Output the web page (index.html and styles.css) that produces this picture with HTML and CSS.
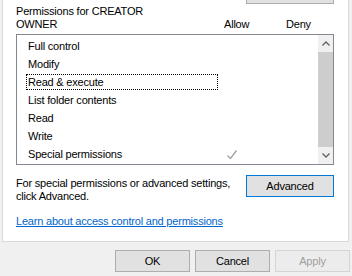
FILE: index.html
```html
<!doctype html>
<html>
<head>
	<title>Permissions</title>
	<link rel="stylesheet" href="styles.css">
</head>
<body>
	<div class="panel">
		<div class="edit-btn"></div>

		<div class="perm-head">
			<div class="perm-title">Permissions for CREATOR<br>OWNER</div>
			<div class="col-allow">Allow</div>
			<div class="col-deny">Deny</div>
		</div>

		<div class="listbox">
			<div class="rows">
				<div class="row"><span class="label">Full control</span><span class="cell"></span><span class="cell deny"></span></div>
				<div class="row"><span class="label">Modify</span><span class="cell"></span><span class="cell deny"></span></div>
				<div class="row"><span class="label focus">Read &amp; execute</span><span class="cell"></span><span class="cell deny"></span></div>
				<div class="row"><span class="label">List folder contents</span><span class="cell"></span><span class="cell deny"></span></div>
				<div class="row"><span class="label">Read</span><span class="cell"></span><span class="cell deny"></span></div>
				<div class="row"><span class="label">Write</span><span class="cell"></span><span class="cell deny"></span></div>
				<div class="row">
					<span class="label">Special permissions</span>
					<span class="cell">
						<svg width="12" height="11" viewBox="0 0 12 11"><polyline points="1.5,6.5 4.5,9.5 10.5,1.5" fill="none" stroke="#a3a3a3" stroke-width="1.4"/></svg>
					</span>
					<span class="cell deny"></span>
				</div>
			</div>
			<div class="scrollbar">
				<div class="arrow">
					<svg width="8" height="5" viewBox="0 0 8 5"><polyline points="0.5,4.5 4,1 7.5,4.5" fill="none" stroke="#606060" stroke-width="1.3"/></svg>
				</div>
				<div class="thumb"></div>
				<div class="arrow">
					<svg width="8" height="5" viewBox="0 0 8 5"><polyline points="0.5,0.5 4,4 7.5,0.5" fill="none" stroke="#606060" stroke-width="1.3"/></svg>
				</div>
			</div>
		</div>

		<div class="advanced-row">
			<div class="advanced-text">For special permissions or advanced settings,<br>click Advanced.</div>
			<button class="btn default">Advanced</button>
		</div>

		<a class="learn" href="#">Learn about access control and permissions</a>
	</div>

	<div class="footer">
		<button class="btn">OK</button>
		<button class="btn">Cancel</button>
		<button class="btn disabled">Apply</button>
	</div>
</body>
</html>
```

FILE: styles.css
```css
body {
	margin: 0;
	width: 352px;
	height: 276px;
	overflow: hidden;
	background: #f0f0f0;
	font-family: "Liberation Sans", Arial, sans-serif;
	font-size: 11px;
	letter-spacing: -0.2px;
	color: #000;
}

.panel {
	margin-left: 2px;
	width: 347px;
	height: 242px;
	box-sizing: border-box;
	padding: 0 14px 0 13px;
	background: #fff;
	border: 1px solid #d9d9d9;
	border-top: none;
	display: flex;
	flex-direction: column;
}

.edit-btn {
	align-self: flex-end;
	width: 86px;
	height: 3px;
	background: #e1e1e1;
	border: 1px solid #adadad;
	border-top: none;
}

.perm-head {
	display: flex;
	align-items: flex-end;
	margin-top: 1px;
	line-height: 13px;
}

.perm-title {
	flex: 1;
}

.col-allow {
	width: 62px;
}

.col-deny {
	width: 48px;
}

.listbox {
	margin-top: 3px;
	height: 131px;
	box-sizing: border-box;
	border: 1px solid #828790;
	display: flex;
}

.rows {
	flex: 1;
	padding-top: 2px;
}

.row {
	display: flex;
	align-items: center;
	height: 18px;
}

.row .label {
	width: 192px;
	height: 16px;
	margin-left: 9px;
	padding-left: 1px;
	box-sizing: border-box;
	border: 1px dotted transparent;
	line-height: 14px;
	white-space: nowrap;
}

.row .label.focus {
	border-color: #000;
}

.cell {
	width: 18px;
	height: 16px;
	margin-left: 5px;
	display: flex;
	align-items: center;
	justify-content: center;
}

.cell.deny {
	margin-left: 49px;
}

.scrollbar {
	width: 15px;
	display: flex;
	flex-direction: column;
	background: #f0f0f0;
}

.arrow {
	height: 17px;
	display: flex;
	align-items: center;
	justify-content: center;
}

.thumb {
	flex: 1;
	background: #cdcdcd;
}

.advanced-row {
	display: flex;
	align-items: flex-start;
	margin-top: 10px;
}

.advanced-text {
	flex: 1;
	line-height: 13px;
	padding-top: 2px;
	white-space: nowrap;
}

.btn {
	font-family: inherit;
	font-size: 11px;
	letter-spacing: inherit;
	color: #000;
	background: #e1e1e1;
	border: 1px solid #adadad;
	padding: 0;
	height: 22px;
	width: 75px;
}

.btn.default {
	width: 88px;
	border-color: #0078d7;
}

.btn.disabled {
	color: #a0a0a0;
	background: #ececec;
	border-color: #d4d4d4;
}

.learn {
	margin-top: 11px;
	align-self: flex-start;
	color: #0066cc;
	line-height: 14px;
}

.footer {
	display: flex;
	justify-content: flex-end;
	gap: 5px;
	padding: 8px 2px 0 0;
}
```
